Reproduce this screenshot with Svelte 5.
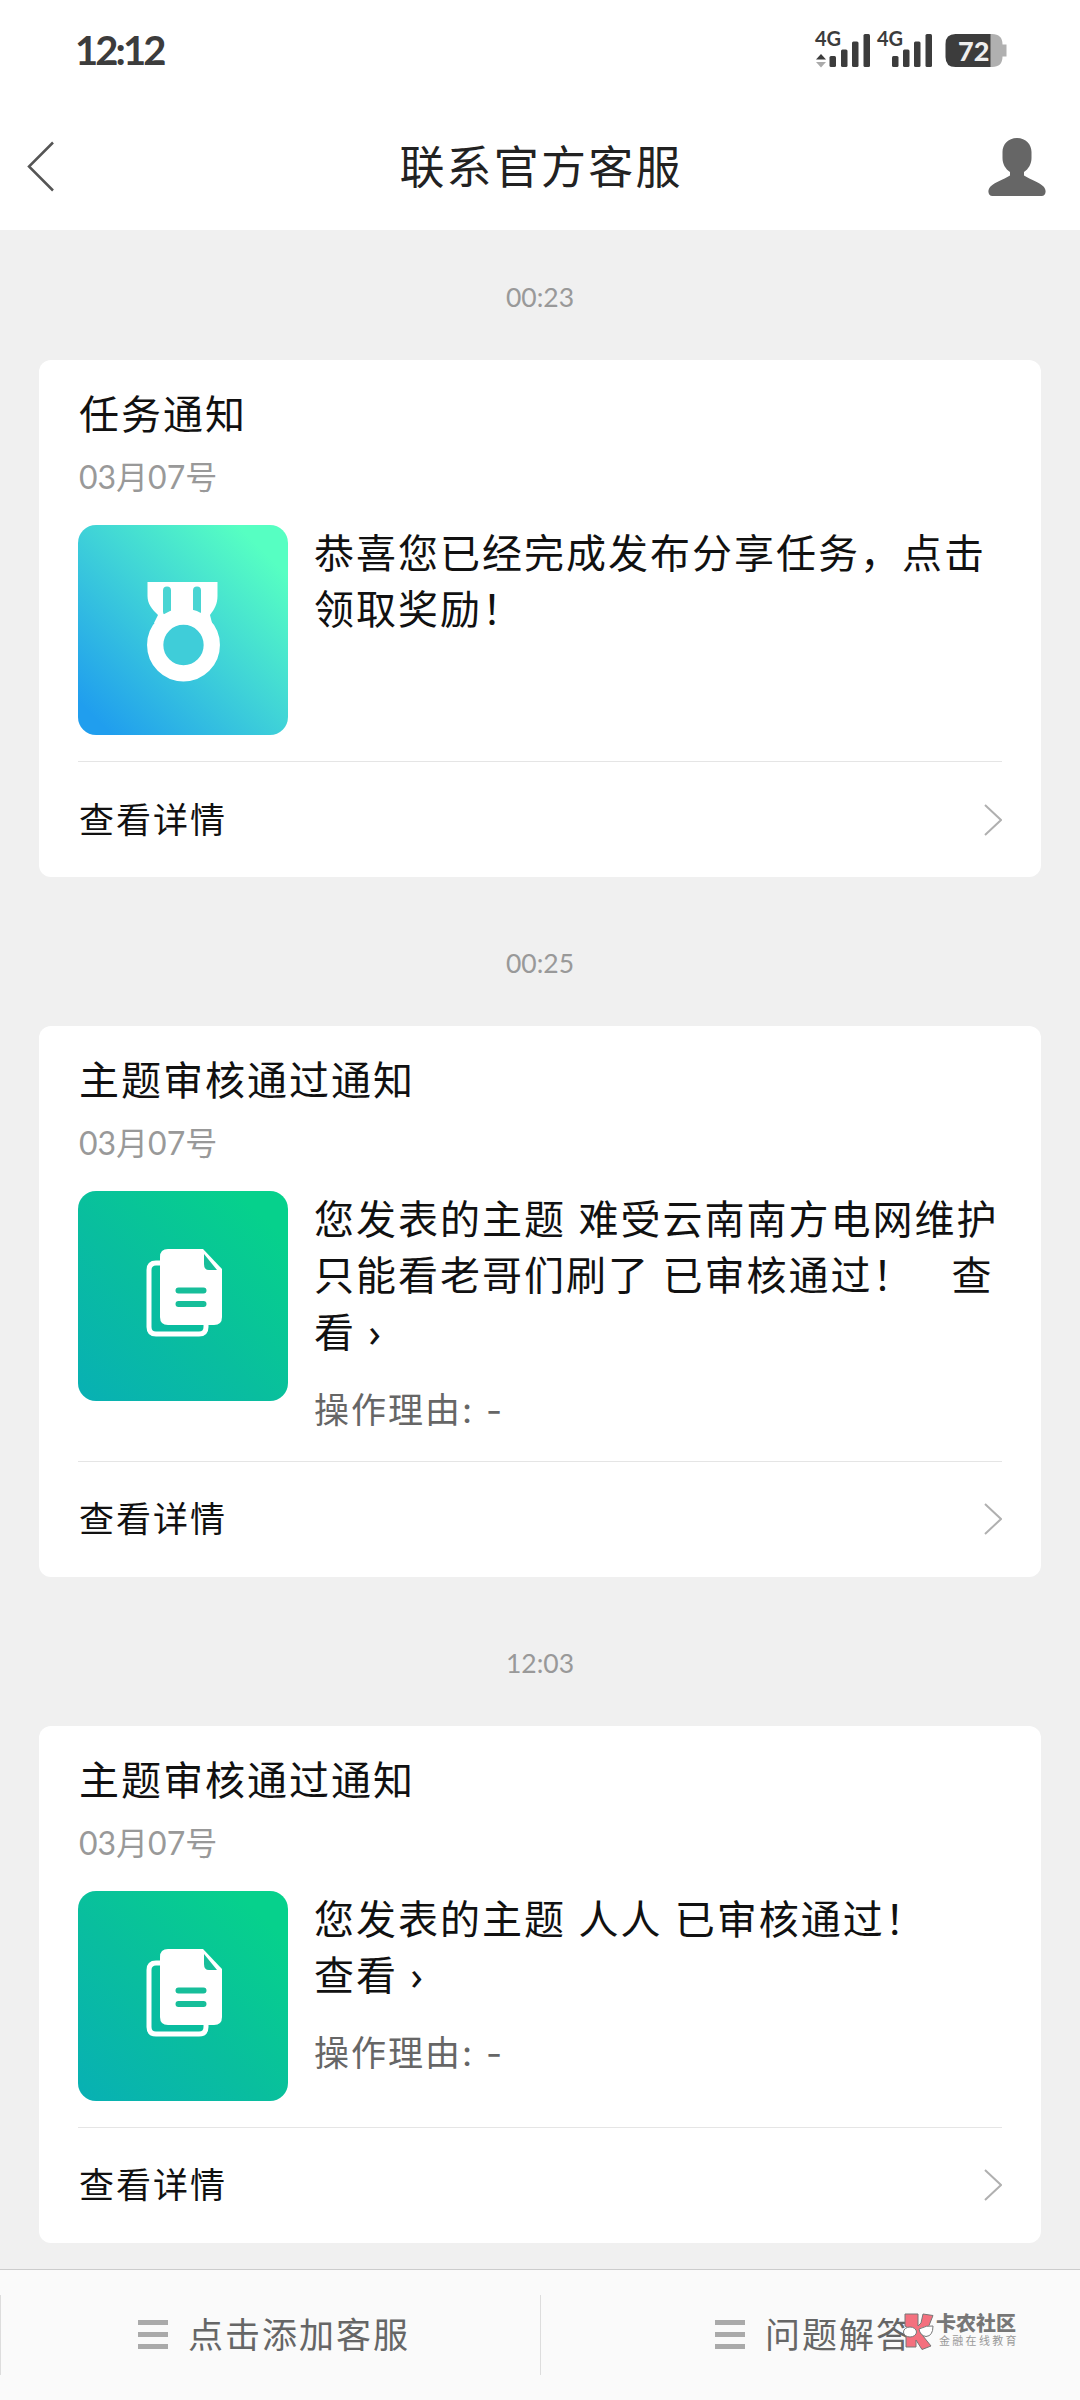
<script>
    let messages = [
        {
            time: "00:23",
            title: "任务通知",
            date: "03月07号",
            icon: "medal",
            text: "恭喜您已经完成发布分享任务，点击\n领取奖励！",
        },
        {
            time: "00:25",
            title: "主题审核通过通知",
            date: "03月07号",
            icon: "doc",
            text: "您发表的主题 难受云南南方电网维护\n只能看老哥们刷了 已审核通过！\u00a0\u00a0\u00a0查\n看 ›",
            reason: "操作理由: -",
        },
        {
            time: "12:03",
            title: "主题审核通过通知",
            date: "03月07号",
            icon: "doc",
            text: "您发表的主题 人人 已审核通过！\n查看 ›",
            reason: "操作理由: -",
        },
    ];
    let menus = ["点击添加客服", "问题解答"];
</script>

<div class="page">
    <div class="status">
        <span class="clock">12:12</span>
        <svg class="signals" width="190" height="44" viewBox="0 0 190 44">
            <g fill="#3c3c3c">
                <text x="0" y="17" class="net">4G</text>
                <path d="M1 30.500l5-5.500 5 5.500z" />
                <rect x="14.500" y="27" width="6.500" height="11" rx="1.500" />
                <rect x="26" y="20.500" width="6.500" height="17.500" rx="1.500" />
                <rect x="37" y="12.500" width="6.500" height="25.500" rx="1.500" />
                <rect x="48.500" y="5" width="6.500" height="33" rx="1.500" />
                <text x="62" y="17" class="net">4G</text>
                <rect x="77" y="27" width="6.500" height="11" rx="1.500" />
                <rect x="88" y="20.500" width="6.500" height="17.500" rx="1.500" />
                <rect x="99" y="12.500" width="6.500" height="25.500" rx="1.500" />
                <rect x="110.500" y="5" width="6.500" height="33" rx="1.500" />
            </g>
            <path d="M1 33h10l-5 5.500z" fill="#aaa" />
            <path d="M175 5h2q10.500 0 10.500 10.500h4v12h-4q0 10.500-10.500 10.500h-2z" fill="#b0b0b0" />
            <path d="M175.500 5h-35q-10 0-10 10v13q0 10 10 10h35z" fill="#3c3c3c" />
            <text x="143" y="31.500" class="level">72</text>
        </svg>
    </div>

    <div class="navbar">
        <svg class="back" width="30" height="52" viewBox="0 0 30 52">
            <path d="M28 2.500L4 26.500l24 24" fill="none" stroke="#555" stroke-width="2.500" />
        </svg>
        <h1>联系官方客服</h1>
        <svg class="user" width="58" height="58" viewBox="0 0 58 58">
            <path d="M29 0C20 0 14.500 6.500 14.500 14v6c0 6 3 11 7.500 14v3.500C15 42 7 44 2.500 48.500C-1 52 0 58 4.500 58h49c4.500 0 5.500-6 2-9.500C51 44 43 42 36 37.500V34c4.500-3 7.500-8 7.500-14v-6C43.500 6.500 38 0 29 0z" fill="#666" />
        </svg>
    </div>

    <div class="chat">
        {#each messages as msg}
        <div class="time">{msg.time}</div>
        <div class="card">
            <h2>{msg.title}</h2>
            <div class="date">{msg.date}</div>
            <div class="content">
                <div class="tile {msg.icon}">
                    {#if msg.icon === "medal"}
                    <svg width="210" height="210" viewBox="0 0 210 210">
                        <path d="M69.500 57h70v14c0 8-3 13-7.500 19l2 8H76l4-8c-6-6-10.500-11-10.500-19z" fill="#fff" />
                        <path d="M89 65.500v21M119 65.500v21" stroke="#49d5d3" stroke-width="8" stroke-linecap="round" />
                        <circle cx="105.500" cy="120" r="20.500" fill="#3fcdd9" />
                        <circle cx="105.500" cy="120" r="28.300" fill="none" stroke="#fff" stroke-width="16.300" />
                    </svg>
                    {:else}
                    <svg width="210" height="210" viewBox="0 0 210 210">
                        <path d="M84 72h-6q-7 0-7 7v57q0 7 7 7h43q7 0 7-7v-4" fill="none" stroke="#fff" stroke-width="5" />
                        <path d="M90 58h35l19 20v48q0 8-8 8H90q-8 0-8-8V66q0-8 8-8z" fill="#fff" />
                        <path d="M126 63v10q0 6 5 6h8z" fill="#17be9a" />
                        <path d="M100.500 99.500h25M100.500 113h25" stroke="#17be9a" stroke-width="6" stroke-linecap="round" />
                    </svg>
                    {/if}
                </div>
                <div class="words">
                    <p>{msg.text}</p>
                    {#if msg.reason}
                    <div class="reason">{msg.reason}</div>
                    {/if}
                </div>
            </div>
            <div class="more">
                <span>查看详情</span>
                <svg width="20" height="34" viewBox="0 0 20 34">
                    <path d="M3 2l16 15L3 32" fill="none" stroke="#b0b0b0" stroke-width="2" />
                </svg>
            </div>
        </div>
        {/each}
    </div>

    <div class="bottom">
        {#each menus as menu}
        <div class="menu">
            <div class="bars"><i></i><i></i><i></i></div>
            <span>{menu}</span>
        </div>
        {/each}
        <div class="brand">
            <svg width="32" height="38" viewBox="0 0 32 38">
                <g fill="#f4707e" stroke="#777" stroke-width="1">
                    <path d="M3 2h13v12l3-3 2-9 10 1.500-4 10-8 8 10 12.500-9 3.500-6-9.500v7H4V24l9-4-10-6z" />
                    <ellipse cx="8" cy="20" rx="6.500" ry="5" fill="#fff" />
                    <path d="M17 17q8-4 14-3 0 10-7 10.500-6-1-7-7.500z" fill="#fff" />
                </g>
            </svg>
            <div class="brandtext">
                <b>卡农社区</b>
                <small>金融在线教育</small>
            </div>
        </div>
    </div>
</div>

<style>
    :global(body) {
        margin: 0;
        background: #f0f0f0;
    }
    .page {
        width: 1080px;
        height: 2400px;
        display: flex;
        flex-direction: column;
        overflow: hidden;
        background: #f0f0f0;
        font-family: Lato, "Noto Sans CJK SC", sans-serif;
        color: #111;
    }
    .status {
        height: 102px;
        flex: none;
        box-sizing: border-box;
        padding: 25px 75px 0 75px;
        display: flex;
        justify-content: space-between;
        background: #fff;
    }
    .clock {
        font: bold 40px/50px Lato, sans-serif;
        letter-spacing: -2.9px;
        color: #3c3c3c;
    }
    .signals {
        margin-top: 4px;
        overflow: visible;
    }
    .net {
        font: bold 20px Lato, sans-serif;
    }
    .level {
        font: 900 27px Lato, sans-serif;
        fill: #eee;
    }
    .navbar {
        height: 128px;
        flex: none;
        box-sizing: border-box;
        padding: 0 34px 0 25px;
        display: grid;
        grid-template-columns: 58px 1fr 58px;
        align-items: center;
        background: #fff;
    }
    .user {
        margin-top: 2px;
    }
    h1 {
        margin: 1px 0 0 11px;
        font-size: 45px;
        font-weight: 400;
        letter-spacing: 2.2px;
        line-height: 60px;
        text-align: center;
        color: #222;
    }
    .chat {
        flex: 1;
        padding: 0 39px;
    }
    .time {
        height: 149px;
        box-sizing: border-box;
        padding-top: 66px;
        font-size: 26.5px;
        line-height: 40px;
        text-align: center;
        color: #999;
    }
    .time:first-child {
        height: 130px;
        padding-top: 47px;
    }
    .card {
        box-sizing: border-box;
        padding: 24px 39px 0;
        border-radius: 12px;
        background: #fff;
    }
    h2 {
        margin: 0 0 0 1px;
        font-size: 40px;
        font-weight: 400;
        line-height: 60px;
        letter-spacing: 2px;
    }
    .date {
        margin: 8px 1px;
        font-size: 32px;
        line-height: 50px;
        color: #999;
        height: 50px;
    }
    .content {
        display: flex;
        gap: 26px;
        margin-top: 23px;
        padding-bottom: 26px;
        border-bottom: 1px solid #e5e5e5;
    }
    .tile {
        width: 210px;
        height: 210px;
        flex: none;
        border-radius: 18px;
        overflow: hidden;
    }
    .medal {
        background: linear-gradient(45deg, #209eee 8%, #40d4d7 52%, #56ffc2 88%);
    }
    .doc {
        background: linear-gradient(45deg, #08b0b4, #09be9e 45%, #06d18c 88%);
    }
    p {
        margin: 0;
        font-family: "Noto Sans", "Noto Sans CJK SC", sans-serif;
        font-size: 40px;
        line-height: 56.3px;
        letter-spacing: 2px;
        white-space: pre;
    }
    .reason {
        margin-top: 25px;
        font-family: Inter, "Noto Sans CJK SC", sans-serif;
        font-size: 35px;
        line-height: 50px;
        letter-spacing: 2px;
        color: #666;
    }
    .more {
        height: 115px;
        display: flex;
        justify-content: space-between;
        align-items: center;
        font-size: 35px;
        letter-spacing: 2px;
    }
    .more span {
        padding: 0 0 5px 1px;
    }
    .bottom {
        position: relative;
        height: 131px;
        flex: none;
        box-sizing: border-box;
        border-top: 1px solid #ccc;
        display: flex;
        align-items: center;
        background: #fafafa;
    }
    .menu {
        flex: 1;
        height: 80px;
        border-left: 1px solid #ddd;
        box-sizing: border-box;
        padding: 0 0 2px 7px;
        display: flex;
        justify-content: center;
        align-items: center;
        gap: 20px;
        font-size: 35px;
        letter-spacing: 2px;
        color: #666;
    }
    .menu span {
        padding-bottom: 4px;
    }
    .bars {
        display: flex;
        flex-direction: column;
        gap: 7px;
    }
    .bars i {
        width: 30px;
        height: 5px;
        background: #aaa;
    }
    /* brand mark floats over the right menu */
    .brand {
        position: absolute;
        left: 902px;
        top: 42px;
        display: flex;
        gap: 2px;
    }
    .brandtext {
        display: flex;
        flex-direction: column;
        color: #777;
    }
    .brandtext b {
        font-size: 20px;
        font-weight: 900;
        line-height: 22px;
    }
    .brandtext small {
        padding-left: 3px;
        font-size: 11px;
        line-height: 13px;
        letter-spacing: 2.3px;
        color: #999;
    }
</style>
